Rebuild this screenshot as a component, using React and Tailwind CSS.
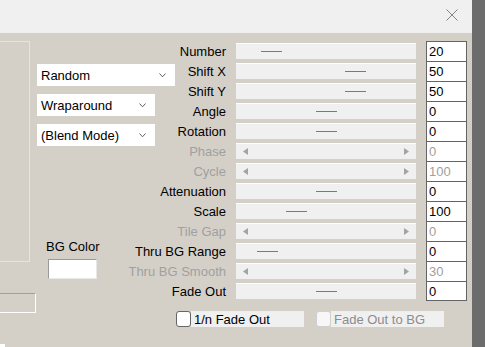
const rows = [
  { label: 'Number', value: '20', thumb: 25 },
  { label: 'Shift X', value: '50', thumb: 109 },
  { label: 'Shift Y', value: '50', thumb: 109 },
  { label: 'Angle', value: '0', thumb: 80 },
  { label: 'Rotation', value: '0', thumb: 80 },
  { label: 'Phase', value: '0', disabled: true },
  { label: 'Cycle', value: '100', disabled: true },
  { label: 'Attenuation', value: '0', thumb: 80 },
  { label: 'Scale', value: '100', thumb: 50 },
  { label: 'Tile Gap', value: '0', disabled: true },
  { label: 'Thru BG Range', value: '0', thumb: 21 },
  { label: 'Thru BG Smooth', value: '30', disabled: true },
  { label: 'Fade Out', value: '0', thumb: 80 },
];

function Chevron() {
  return (
    <svg width="7" height="5" viewBox="0 0 7 5" className="shrink-0">
      <polyline points="0.5,0.5 3.5,3.8 6.5,0.5" fill="none" stroke="#606060" strokeWidth="1" />
    </svg>
  );
}

function Dropdown({ label, width, className = '' }) {
  return (
    <div className={`flex h-[22px] items-center justify-between bg-white pl-[4px] pr-[9px] ${width} ${className}`}>
      <span>{label}</span>
      <Chevron />
    </div>
  );
}

function Arrow({ dir }) {
  const pts = dir === 'left' ? '5,0 0,3.5 5,7' : '0,0 5,3.5 0,7';
  return (
    <svg width="5" height="7" viewBox="0 0 5 7">
      <polygon points={pts} fill="#a3a3a3" />
    </svg>
  );
}

function Track({ row }) {
  return (
    <div className="relative ml-[10px] h-[16px] w-[180px] border-t border-white bg-[#f0f0f0]">
      {row.disabled ? (
        <div className="flex h-full items-center justify-between pl-[7px] pr-[7px]">
          <Arrow dir="left" />
          <Arrow dir="right" />
        </div>
      ) : (
        <div className="absolute top-[7px] h-px w-[21px] bg-[#7a7a7a]" style={{ left: row.thumb }} />
      )}
    </div>
  );
}

function Check({ label, disabled }) {
  return (
    <div className="flex h-[16px] w-[128px] items-stretch">
      <div
        className={`h-[16px] w-[15px] shrink-0 rounded-[3px] border ${
          disabled ? 'border-[#cfcfcf] bg-[#f7f7f7]' : 'border-[#666666] bg-white'
        }`}
      />
      <div
        className={`flex flex-1 items-center bg-[#f0f0f0] pl-[3px] ${disabled ? 'text-[#8c8c8c]' : 'text-black'}`}
      >
        {label}
      </div>
    </div>
  );
}

export default function App() {
  return (
    <div
      className="flex h-[347px] w-[485px] overflow-hidden text-[13px] leading-[15px] text-black"
      style={{ fontFamily: '"Liberation Sans", Arial, sans-serif' }}
    >
      <div className="flex w-[472px] flex-col">
        <div className="flex h-[33px] shrink-0 justify-end bg-[#f0f0f0] pr-[14px] pt-[9px]">
          <svg width="12" height="12" viewBox="0 0 12 12">
            <path d="M0.5 0.5 L11.5 11.5 M11.5 0.5 L0.5 11.5" stroke="#858585" strokeWidth="1" />
          </svg>
        </div>

        <div className="grid flex-1 bg-[#d4d0c8] pt-[8px]">
          {/* left panel */}
          <div className="flex [grid-area:1/1]">
            <div className="flex w-[36px] flex-col">
              <div className="h-[221px] w-[30px] border-y border-r border-[#e6e4de]" />
              <div className="mt-[31px] h-[20px] w-[36px] border-t border-r border-b border-[#a0a0a0] border-r-white border-b-white" />
              <div className="mt-[31px] h-[3px] w-[5px] bg-white" />
            </div>
            <div className="ml-[1px] flex flex-col items-start">
              <Dropdown label="Random" width="w-[138px]" className="mt-[23px]" />
              <Dropdown label="Wraparound" width="w-[118px]" className="mt-[8px]" />
              <Dropdown label="(Blend Mode)" width="w-[118px]" className="mt-[8px]" />
              <div className="ml-[9px] mt-[93px]">BG Color</div>
              <div className="ml-[11px] mt-[5px] h-[20px] w-[49px] border border-[#9a9a9a] border-b-[#e8e8e8] border-r-[#e8e8e8] bg-white" />
            </div>
          </div>

          {/* rows */}
          <div className="flex flex-col [grid-area:1/1]">
            {rows.map((row, i) => (
              <div key={row.label} className="flex h-[20px] items-center">
                <div className={`w-[226px] text-right ${row.disabled ? 'text-[#a0a0a0]' : ''}`}>{row.label}</div>
                <Track row={row} />
                <div
                  className={`ml-[10px] flex h-[20px] w-[41px] items-center border-x border-t border-[#646464] bg-white pl-[2px] ${
                    i === rows.length - 1 ? 'border-b' : ''
                  } ${row.disabled ? 'text-[#a0a0a0]' : ''}`}
                >
                  {row.value}
                </div>
              </div>
            ))}
            <div className="mt-[10px] flex gap-[12px] pl-[176px]">
              <Check label="1/n Fade Out" />
              <Check label="Fade Out to BG" disabled />
            </div>
          </div>
        </div>
      </div>
      <div className="flex-1 bg-[#6c6c6c]" />
    </div>
  );
}
